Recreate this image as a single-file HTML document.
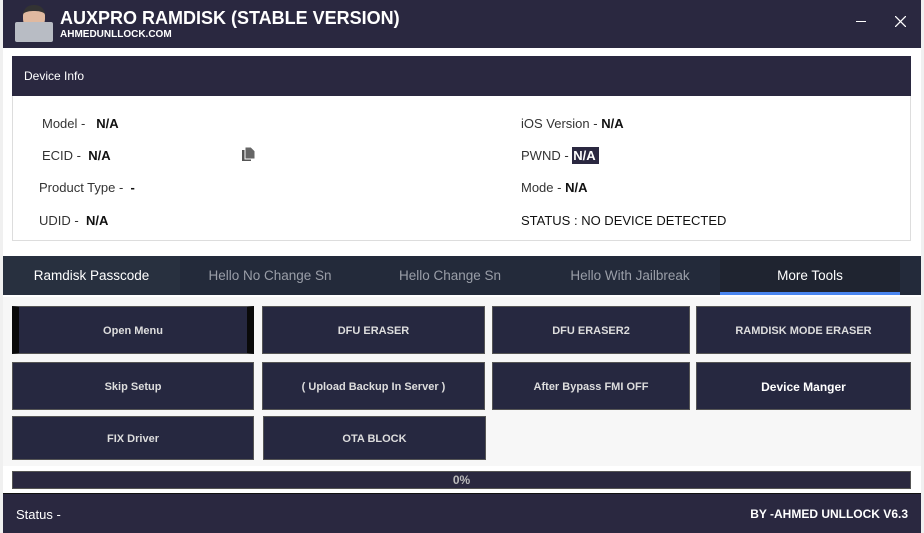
<!DOCTYPE html><html><head><style>
*{margin:0;padding:0;box-sizing:border-box}
body{width:924px;height:533px;background:#f0f0f0;font-family:"Liberation Sans",sans-serif;position:relative;overflow:hidden}
.a{position:absolute}
.win{left:3px;top:0;width:918px;height:533px;background:#fff}
.tb{left:3px;top:0;width:918px;height:48px;background:#2a2840;color:#fff}
.btn{position:absolute;background:#262840;border:1px solid #555;color:#ddd;font-size:11px;font-weight:bold;display:flex;align-items:center;justify-content:center;padding-top:2px}
.lbl{position:absolute;font-size:13px;color:#333}
.lbl b{color:#111}
.tab{position:absolute;top:256px;height:39px;font-size:13px;color:#9a9ea8;display:flex;align-items:center;justify-content:center}
</style></head><body>
<div class="a win"></div>
<div class="a tb">
<div class="a" style="left:10px;top:4px;width:42px;height:38px">
<div class="a" style="left:10px;top:1px;width:22px;height:24px;border-radius:10px;background:#e0b9a0;border-top:6px solid #333"></div>
<div class="a" style="left:2px;top:18px;width:38px;height:20px;background:#b8bcc4;border-radius:2px"></div>
</div>
<div class="a" style="left:57px;top:8px;font-size:18px;font-weight:bold">AUXPRO RAMDISK (STABLE VERSION)</div>
<div class="a" style="left:57px;top:29px;font-size:10px;font-weight:bold">AHMEDUNLLOCK.COM</div>
<div class="a" style="left:853px;top:21px;width:10px;height:1px;background:#fff"></div>
<svg class="a" style="left:892px;top:16px" width="11" height="11" viewBox="0 0 11 11"><path d="M0 0L11 11M11 0L0 11" stroke="#fff" stroke-width="1.3"/></svg>
</div>
<div class="a" style="left:12px;top:56px;width:899px;height:185px;border:1px solid #ddd;background:#fff"></div>
<div class="a" style="left:12px;top:56px;width:899px;height:40px;background:#2a2840;color:#fff;font-size:12px;padding:13px 0 0 12px">Device Info</div>
<div class="lbl" style="left:42px;top:116px">Model - &nbsp;&nbsp;<b>N/A</b></div>
<div class="lbl" style="left:42px;top:148px">ECID - &nbsp;<b>N/A</b></div>
<div class="lbl" style="left:39px;top:180px">Product Type - &nbsp;<b>-</b></div>
<div class="lbl" style="left:39px;top:213px">UDID - &nbsp;<b>N/A</b></div>
<div class="lbl" style="left:521px;top:116px">iOS Version - <b>N/A</b></div>
<div class="lbl" style="left:521px;top:148px">PWND - <b style="background:#2a2840;color:#fff;padding:1px 3px 1px 1px">N/A</b></div>
<div class="lbl" style="left:521px;top:180px">Mode - <b>N/A</b></div>
<div class="lbl" style="left:521px;top:213px;color:#111">STATUS : NO DEVICE DETECTED</div>
<svg class="a" style="left:241px;top:147px" width="15" height="15" viewBox="0 0 15 15"><rect x="1" y="3" width="9" height="11" fill="#555"/><path d="M4 0h6l4 4v8H4z" fill="#666" stroke="#fff" stroke-width="1"/></svg>
<div class="a" style="left:3px;top:256px;width:918px;height:39px;background:#232a3a"></div>
<div class="tab" style="left:3px;width:177px;background:#28303f;color:#fff;font-size:13.5px">Ramdisk Passcode</div>
<div class="tab" style="left:180px;width:180px;font-size:13.5px">Hello No Change Sn</div>
<div class="tab" style="left:360px;width:180px;font-size:13.5px">Hello Change Sn</div>
<div class="tab" style="left:540px;width:180px;font-size:13.5px">Hello With Jailbreak</div>
<div class="tab" style="left:720px;width:180px;background:#1f2430;color:#fff;border-bottom:3px solid #4a86f0;padding-top:3px;font-size:13.5px">More Tools</div>
<div class="a" style="left:3px;top:297px;width:918px;height:169px;background:#f7f7f7"></div>
<div class="btn" style="left:12px;top:306px;width:242px;height:48px;border-left:7px solid #0a0a0a;border-right:7px solid #0a0a0a">Open Menu</div>
<div class="btn" style="left:262px;top:306px;width:223px;height:48px">DFU ERASER</div>
<div class="btn" style="left:492px;top:306px;width:198px;height:48px">DFU ERASER2</div>
<div class="btn" style="left:696px;top:306px;width:215px;height:48px">RAMDISK MODE ERASER</div>
<div class="btn" style="left:12px;top:362px;width:242px;height:48px">Skip Setup</div>
<div class="btn" style="left:262px;top:362px;width:223px;height:48px">( Upload Backup In Server )</div>
<div class="btn" style="left:492px;top:362px;width:198px;height:48px">After Bypass FMI OFF</div>
<div class="btn" style="left:696px;top:362px;width:215px;height:48px;font-size:12px;color:#fff">Device Manger</div>
<div class="btn" style="left:12px;top:416px;width:242px;height:44px">FIX Driver</div>
<div class="btn" style="left:263px;top:416px;width:223px;height:44px">OTA BLOCK</div>
<div class="btn" style="left:12px;top:471px;width:899px;height:18px;background:#2a2840;color:#bbb;font-size:12px;padding-top:0">0%</div>
<div class="a" style="left:3px;top:493px;width:918px;height:40px;background:#2a2840;border-top:1px solid #111"></div>
<div class="a" style="left:16px;top:507px;color:#fff;font-size:13px">Status -</div>
<div class="a" style="left:740px;top:507px;width:168px;text-align:right;color:#fff;font-size:12px;font-weight:bold">BY -AHMED UNLLOCK V6.3</div>
</body></html>
